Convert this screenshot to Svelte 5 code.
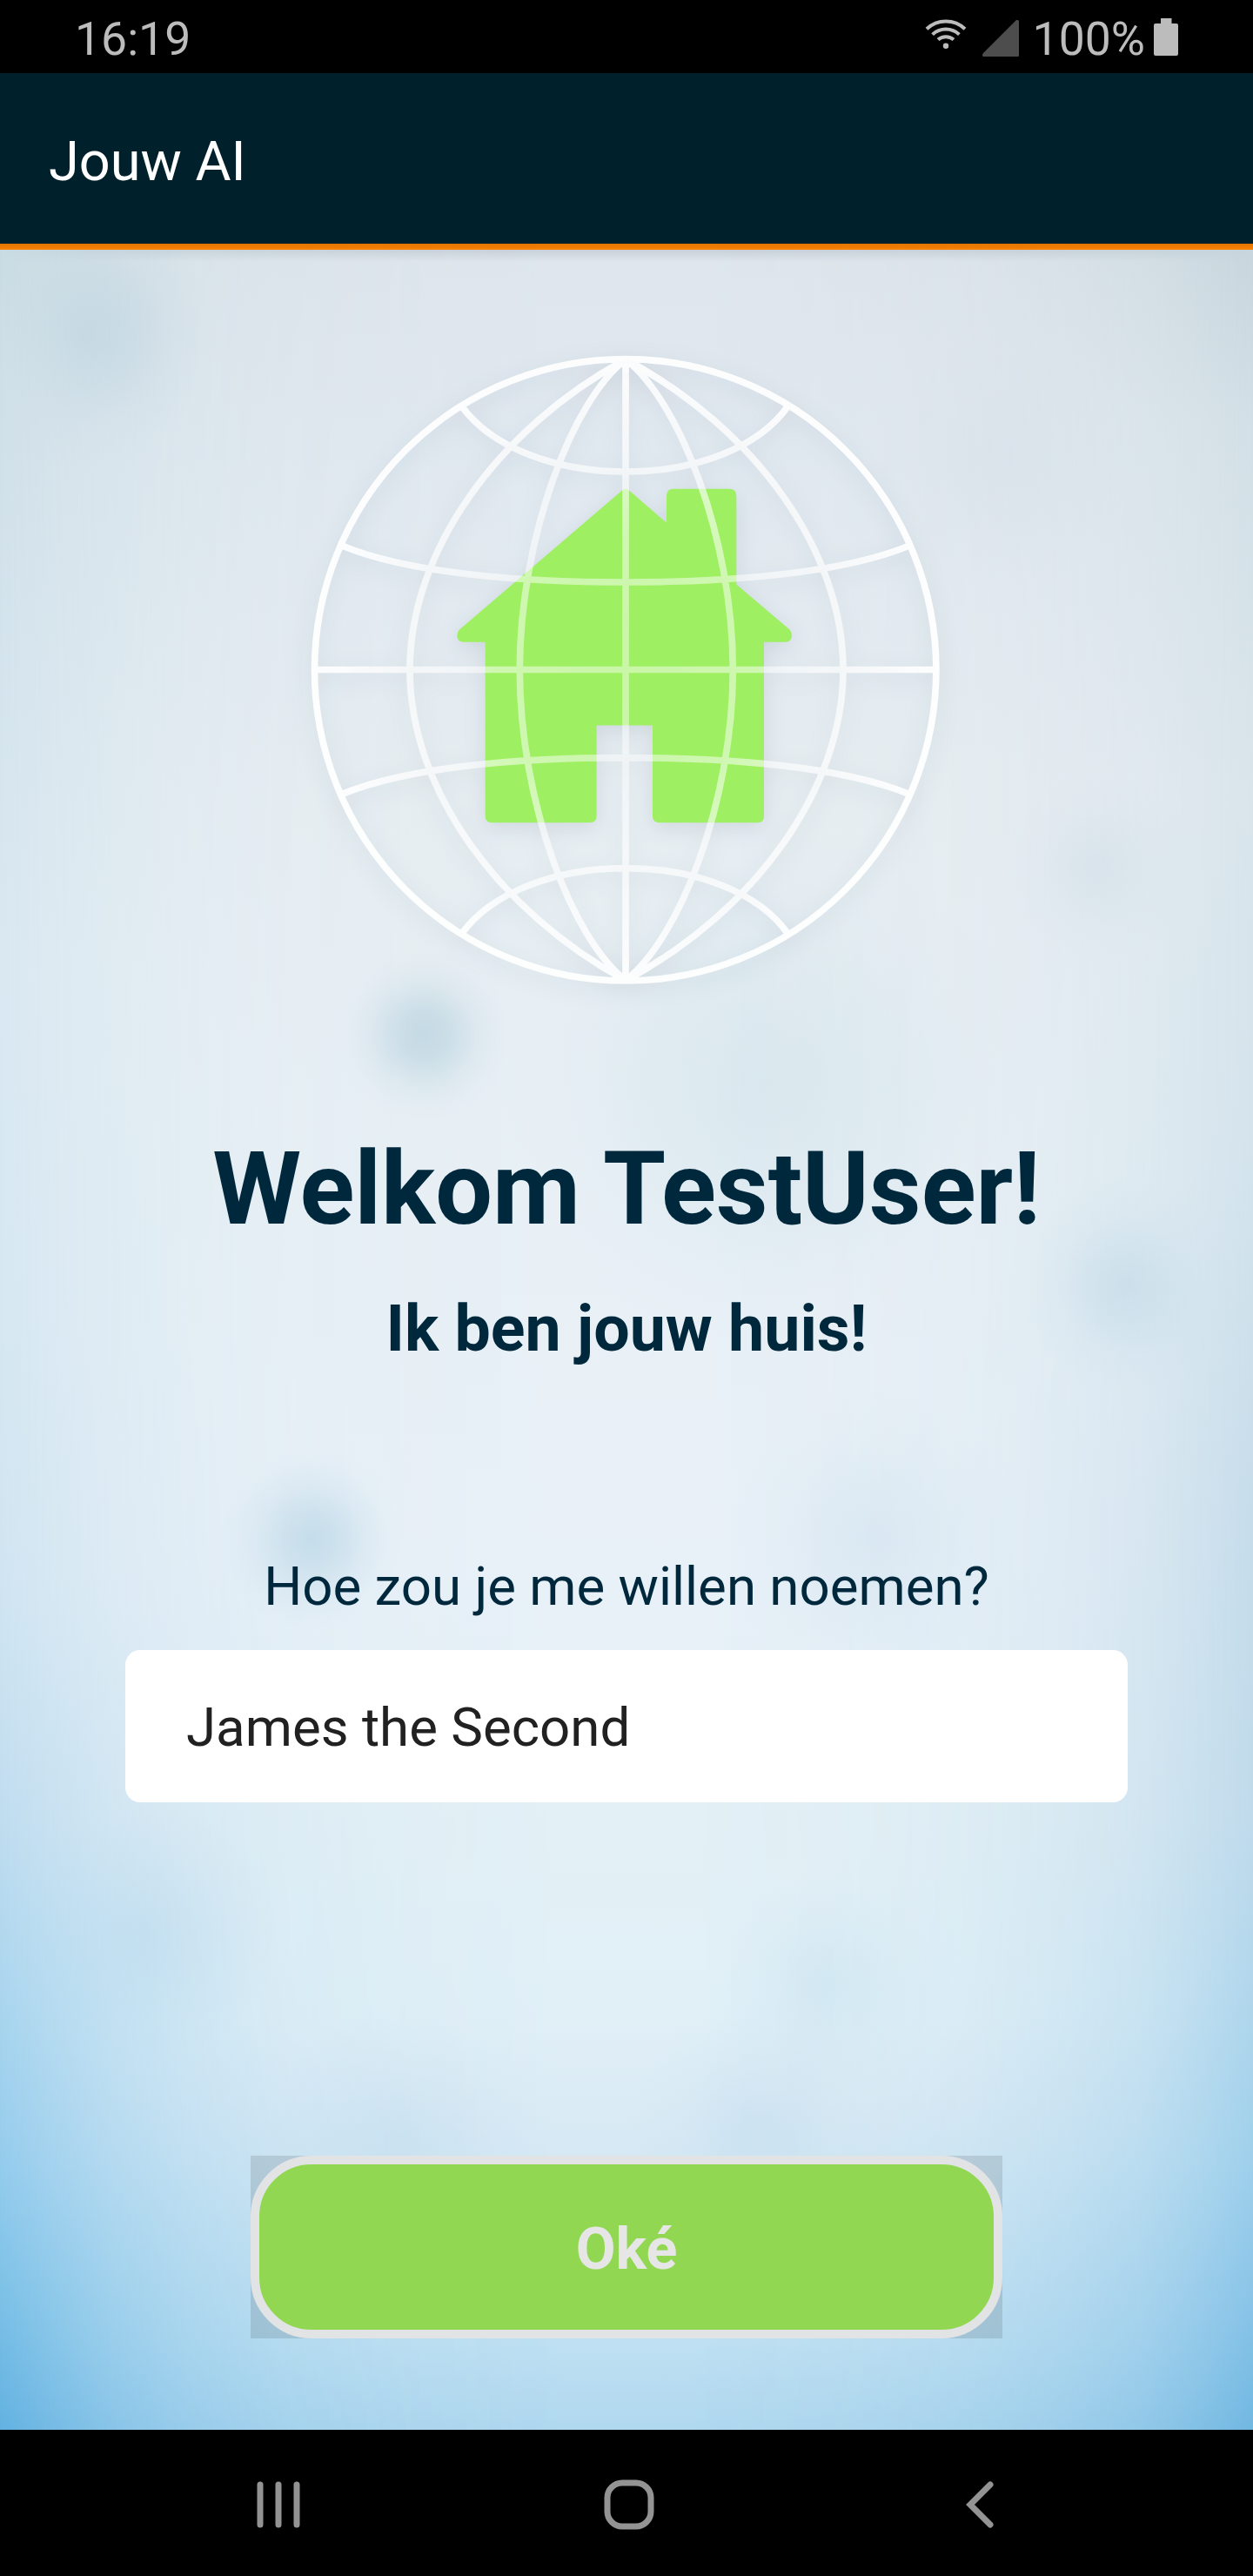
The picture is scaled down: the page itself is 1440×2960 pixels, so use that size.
<script>
  let name = $state('James the Second');
</script>

<div class="screen">
  <div class="status">
    <span class="clock">16:19</span>
    <div class="indicators">
      <svg class="wifi" viewBox="0 0 48 36" fill="none" stroke="#bcbcbc" stroke-width="4">
        <path d="M2 12.2 A32 32 0 0 1 46 12.2" />
        <path d="M8.6 18.6 A22.6 22.6 0 0 1 39.4 18.6" />
        <path d="M15 24.6 A13.6 13.6 0 0 1 33 24.6" />
        <circle cx="24" cy="31.8" r="3.2" fill="#bcbcbc" stroke="none" />
      </svg>
      <svg class="signal" viewBox="0 0 42 42"><path d="M40.500 0H39L1 38Q0 39 0 40.500Q0 42 1.500 42H40.500Q42 42 42 40.500V1.500Q42 0 40.500 0Z" fill="#4d4d4d" /></svg>
      <span class="percent">100%</span>
      <svg class="battery" viewBox="0 0 28 43"><path d="M8 0H20.500V6H26Q28 6 28 8V41Q28 43 26 43H2Q0 43 0 41V8Q0 6 2 6H8Z" fill="#bcbcbc" /></svg>
    </div>
  </div>

  <header><h2>Jouw AI</h2></header>

  <main>
    <svg class="globe" viewBox="338 389 762 762">
      <defs>
        <radialGradient id="fade" gradientUnits="userSpaceOnUse" cx="718.700" cy="769.800" r="361">
          <stop offset="0" stop-color="#fff" stop-opacity=".44" />
          <stop offset=".4" stop-color="#fff" stop-opacity=".5" />
          <stop offset=".8" stop-color="#fff" stop-opacity=".74" />
          <stop offset="1" stop-color="#fff" stop-opacity=".92" />
        </radialGradient>
      </defs>
      <path
        fill="#9eef61"
        d="M715 563.500Q719 560 723 563.500L766 600.700V570Q766 561.700 774 561.700H838Q846.300 561.700 846.300 570V671.500L907.500 723.500Q910 726 910 730Q910 737.700 902 737.700H878V938Q878 945.300 871 945.300H757.500Q750 945.300 750 938V833.500H685.600V938Q685.600 945.300 678 945.300H565Q557.700 945.300 557.700 938V737.700H533Q525.300 737.700 525.300 730Q525.300 726 528 723.500Z"
      />
      <path
        fill="none"
        stroke="url(#fade)"
        stroke-width="7.700"
        d="M361.500 769.800A357.200 357.200 0 0 1 1075.900 769.800A357.200 357.200 0 0 1 361.500 769.800Z
        M719 413V1127M361 769.500H1076
        M719 413C572 493 471 633 471 769.800C471 906.600 572 1046.600 719 1126.600
        M719 413C868 493 969 633 969 769.800C969 906.600 868 1046.600 719 1126.600
        M719 413C657 461 597.300 619 597.300 769.800C597.300 920.600 657 1078.600 719 1126.600
        M719 413C781 461 842.300 619 842.300 769.800C842.300 920.600 781 1078.600 719 1126.600
        M393 627C470 659 600 669 719 669C838 669 968 659 1045 627
        M393 912.600C470 880.600 600 870.600 719 870.600C838 870.600 968 880.600 1045 912.600
        M530 466C565 515 640 542 719 542C798 542 872 515 906 466
        M530 1073.600C565 1024.600 640 997.600 719 997.600C798 997.600 872 1024.600 906 1073.600"
      />
    </svg>
    <h1>Welkom TestUser!</h1>
    <h3>Ik ben jouw huis!</h3>
    <label for="name">Hoe zou je me willen noemen?</label>
    <input id="name" type="text" bind:value={name} />
    <div class="pressed"><button type="button">Oké</button></div>
  </main>

  <nav>
    <svg viewBox="0 0 60 60" stroke="#939393" stroke-width="7" stroke-linecap="round"><path d="M9 7V53M30 7V53M51 7V53" /></svg>
    <svg viewBox="0 0 60 60" fill="none" stroke="#939393" stroke-width="7"><rect x="5" y="5" width="50" height="50" rx="17" /></svg>
    <svg viewBox="0 0 60 60" fill="none" stroke="#939393" stroke-width="7" stroke-linecap="round"><path d="M42 7L19 30L42 53" /></svg>
  </nav>
</div>

<style>
  :global(body) { margin: 0; background: #000; }
  .screen {
    width: 1440px;
    height: 2960px;
    display: flex;
    flex-direction: column;
    font-family: Roboto, sans-serif;
    color: #00283c;
  }
  .status {
    box-sizing: border-box;
    height: 84px;
    padding: 0 86px;
    display: flex;
    justify-content: space-between;
    align-items: flex-start;
    background: #000;
    color: #bcbcbc;
    font-size: 53.5px;
    line-height: 63px;
  }
  .clock, .percent { margin-top: 13px; }
  .indicators { display: flex; }
  .wifi { width: 48px; height: 36px; margin: 21px 18px 0 0; }
  .signal { width: 42px; height: 42px; margin: 23px 16px 0 0; }
  .battery { width: 28px; height: 43px; margin: 21px 0 0 10px; }
  header {
    box-sizing: border-box;
    height: 203px;
    padding: 0 56px 7px;
    background: linear-gradient(#e27400, #fa8200) bottom / 100% 7px no-repeat, #00212b;
    display: flex;
    align-items: center;
  }
  h2 { margin: 7px 0 0; font-size: 63px; line-height: 73px; font-weight: 400; color: #fff; }
  h1, h3 { margin: 0; font-weight: 700; }
  main {
    position: relative;
    isolation: isolate;
    height: 2505px;
    display: flex;
    flex-direction: column;
    align-items: center;
    background:
      linear-gradient(rgba(0, 20, 40, .1), transparent 14px),
      radial-gradient(circle 150px at 95px 98px, rgba(150, 190, 208, .5), rgba(150, 190, 208, .3) 35%, rgba(150, 190, 208, .08) 70%, transparent),
      radial-gradient(circle 100px at 487px 902px, rgba(158, 194, 212, .48), rgba(158, 194, 212, .38) 28%, rgba(158, 194, 212, .14) 60%, rgba(158, 194, 212, .03) 85%, transparent),
      radial-gradient(circle 105px at 357px 1482px, rgba(155, 198, 219, .48), rgba(155, 198, 219, .36) 28%, rgba(155, 198, 219, .14) 60%, rgba(155, 198, 219, .03) 85%, transparent),
      radial-gradient(circle 125px at 1298px 1190px, rgba(155, 198, 219, .42), rgba(155, 198, 219, .27) 30%, rgba(155, 198, 219, .08) 65%, transparent),
      radial-gradient(circle 110px at 1265px 710px, rgba(195, 210, 225, .4), rgba(195, 210, 225, .1) 60%, transparent),
      radial-gradient(circle 150px at 1150px 245px, rgba(203, 214, 222, .25), rgba(203, 214, 222, .08) 60%, transparent),
      radial-gradient(circle 300px at 880px 960px, rgba(203, 224, 232, .48), rgba(203, 224, 232, .24) 50%, rgba(203, 224, 232, .05) 80%, transparent),
      radial-gradient(circle 170px at 1000px 1480px, rgba(195, 220, 235, .36), rgba(195, 220, 235, .1) 60%, transparent),
      radial-gradient(circle 130px at 950px 1995px, rgba(180, 217, 236, .3), rgba(180, 217, 236, .08) 60%, transparent),
      radial-gradient(circle 150px at 870px 2160px, rgba(180, 212, 234, .3), rgba(180, 212, 234, .08) 60%, transparent),
      radial-gradient(circle 150px at 460px 2170px, rgba(180, 212, 234, .26), rgba(180, 212, 234, .08) 60%, transparent),
      radial-gradient(circle 150px at 170px 1935px, rgba(170, 205, 230, .3), rgba(170, 205, 230, .1) 60%, transparent),
      linear-gradient(#dfe6ed, #e1e9f0 9%, #e7eef2 25%, #e8f0f5 42%, #e9f1f8 60%, #e3f0f6 72%, #e1f0f7 81%, #dbebf5 85%, #d4e8f4 88%, #bfe0f2 96%, #b0d8ef);
  }
  /* Cooler tints that fade in from the left and right edges */
  main::before, main::after {
    content: '';
    position: absolute;
    inset: 0;
    z-index: -1;
  }
  main::before {
    background: linear-gradient(#c9dbe2, #cfdfe7 6%, #d3e3ec 17%, #d9e8f1 33%, #d6e7f1 49%, #cfe4f1 62%, #bfdcef 72%, #aad5ee 80%, #93cbec 88%, #79bfe6 94.5%, #62b1e1);
    mask-image: linear-gradient(90deg, #000, rgba(0, 0, 0, .76) 4%, rgba(0, 0, 0, .5) 9%, rgba(0, 0, 0, .3) 15%, rgba(0, 0, 0, .14) 23%, rgba(0, 0, 0, .05) 33%, transparent 45%);
  }
  main::after {
    background: linear-gradient(#c7d5dc, #d3dfe6 8%, #d9e4eb 25%, #d3e3ec 42%, #c6dcea 58%, #bfdaeb 72%, #b0d6ec 80%, #9dcfeb 88%, #87c3e7 94.5%, #70b7e1);
    mask-image: linear-gradient(270deg, #000, rgba(0, 0, 0, .74) 4%, rgba(0, 0, 0, .48) 9%, rgba(0, 0, 0, .3) 15%, rgba(0, 0, 0, .14) 23%, rgba(0, 0, 0, .05) 33%, transparent 45%);
  }
  .globe {
    width: 762px;
    height: 762px;
    margin: 102px 2px 0 0;
    filter: drop-shadow(0 6px 12px rgba(20, 40, 60, .11));
  }
  h1 { margin-top: 147px; font-size: 116.500px; line-height: 136px; white-space: nowrap; }
  h3 { margin-top: 50px; font-size: 73.500px; line-height: 86px; }
  label { margin-top: 216px; font-size: 61.800px; line-height: 74px; }
  input {
    box-sizing: border-box;
    width: 1152px;
    height: 175px;
    margin-top: 36px;
    padding: 3px 70px 0;
    border: 0;
    border-radius: 17px;
    outline: 0;
    background: #fff;
    color: #212121;
    font: 400 61.800px/74px Roboto, sans-serif;
  }
  .pressed { margin-top: 406px; width: 864px; height: 210px; background: rgba(0, 0, 0, .11); }
  button {
    display: block;
    box-sizing: border-box;
    width: 864px;
    height: 210px;
    padding: 4px 0 0;
    border: 10.500px solid #e1e3e5;
    border-radius: 70px;
    background: #92d751;
    color: #e6e6e6;
    font: 700 66.500px/78px Roboto, sans-serif;
  }
  nav {
    flex: 1;
    background: #000;
    display: flex;
    justify-content: space-between;
    align-items: center;
    padding: 4px 284px 0 290px;
  }
  nav svg { width: 60px; height: 60px; }
</style>
